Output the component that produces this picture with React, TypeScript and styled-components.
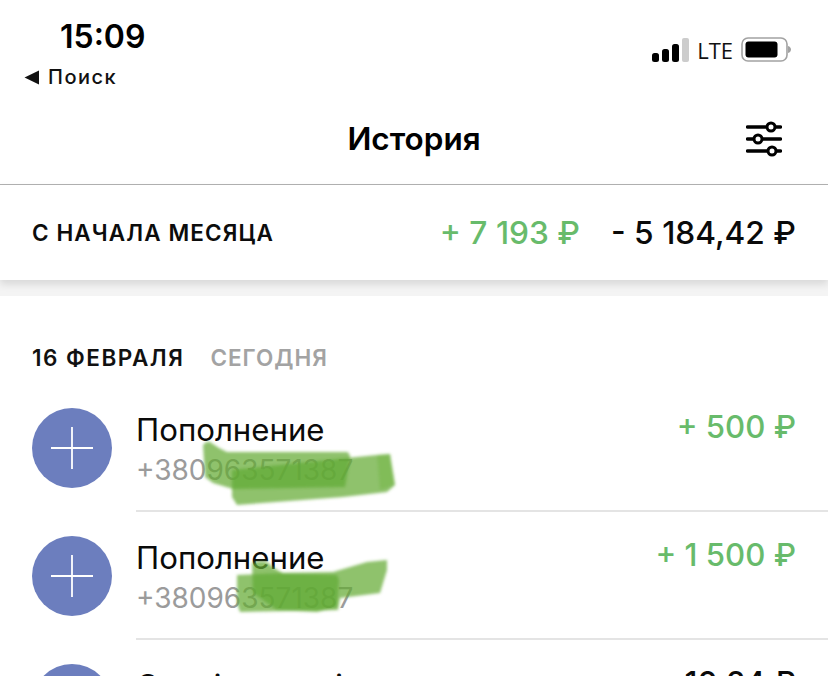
import React from 'react'
import styled, { createGlobalStyle } from 'styled-components'

const GlobalStyle = createGlobalStyle`
  html, body {
    margin: 0;
    padding: 0;
    background: #fff;
  }
  body {
    font-family: Inter, "Liberation Sans", sans-serif;
    overflow: hidden;
  }
`

const Screen = styled.div`
  width: 828px;
  height: 676px;
  overflow: hidden;
  background: #fff;
`

const StatusBar = styled.div`
  height: 100px;
  padding: 19px 32px 0 24px;
  box-sizing: border-box;
  display: flex;
  justify-content: space-between;
`

const StatusLeft = styled.div`
  display: flex;
  flex-direction: column;
`

const Time = styled.div`
  font-size: 32px;
  line-height: 36px;
  font-weight: 600;
  color: #000;
  margin-left: 36px;
`

const BackLink = styled.div`
  display: flex;
  align-items: center;
  gap: 8px;
  font-size: 20px;
  line-height: 30px;
  font-weight: 500;
  letter-spacing: 1.5px;
  color: #111;
  margin-top: 7px;
`

const StatusRight = styled.div`
  display: flex;
  align-items: center;
  gap: 8px;
  height: 26px;
  margin-top: 18px;
  margin-right: 5px;
`

const Lte = styled.span`
  font-family: "Open Sans", sans-serif;
  font-size: 22px;
  line-height: 26px;
  color: #111;
`

const NavBar = styled.div`
  height: 84px;
  display: flex;
  align-items: center;
  justify-content: center;
  position: relative;
  border-bottom: 1px solid #b2b2b2;
`

const Title = styled.div`
  font-size: 31.5px;
  font-weight: 600;
  color: #000;
  margin-top: -8px;
`

const FilterIcon = styled.svg`
  position: absolute;
  right: 46px;
  top: 21px;
`

const Summary = styled.div`
  height: 95px;
  padding: 0 32px;
  display: flex;
  align-items: center;
  background: #fff;
  box-shadow: 0 4px 8px rgba(0, 0, 0, 0.12);
  position: relative;
`

const SummaryLabel = styled.div`
  font-size: 22.5px;
  font-weight: 600;
  letter-spacing: 1.1px;
  color: #0c0c0c;
  flex: 1;
`

const SummaryValue = styled.div<{ $income?: boolean }>`
  font-size: 31.7px;
  font-weight: 500;
  color: ${({ $income }) => ($income ? '#68bb6b' : '#0a0a0a')};
  margin-left: ${({ $income }) => ($income ? '0' : '31px')};
`

const Band = styled.div`
  height: 16px;
  background: #f4f4f4;
`

const DateHeader = styled.div`
  padding: 47px 32px 0;
  height: 37px;
  display: flex;
  gap: 26px;
  font-size: 22.5px;
  line-height: 30px;
  font-weight: 600;
`

const DateText = styled.span`
  color: #111;
  letter-spacing: 1.5px;
`

const TodayText = styled.span`
  color: #a3a3a3;
  letter-spacing: 1px;
`

const List = styled.div`
  padding-top: 8px;
`

const Row = styled.div`
  height: 128px;
  display: flex;
  padding-left: 32px;
  box-sizing: border-box;
  position: relative;
`

const Avatar = styled.div`
  width: 80px;
  height: 80px;
  border-radius: 50%;
  background: #6c7ebe;
  display: flex;
  align-items: center;
  justify-content: center;
  flex-shrink: 0;
  margin-top: 20px;
`

const RowBody = styled.div`
  flex: 1;
  margin-left: 24px;
  padding: 20px 32px 0 0;
  display: flex;
  justify-content: space-between;
  border-bottom: 2px solid #e4e4e4;
  height: 102px;
`

const RowText = styled.div`
  display: flex;
  flex-direction: column;
`

const RowTitle = styled.div`
  font-size: 31.2px;
  line-height: 44px;
  color: #0a0a0a;
`

const RowSub = styled.div`
  font-size: 28px;
  line-height: 36px;
  color: #9b9b9b;
`

const RowAmount = styled.div<{ $income?: boolean }>`
  font-size: 31.2px;
  line-height: 38px;
  font-weight: 500;
  color: ${({ $income }) => ($income ? '#68bb6b' : '#0a0a0a')};
`

const Smear = styled.svg`
  position: absolute;
  pointer-events: none;
  overflow: visible;
`

const FirstSmear = styled(Smear)`
  left: 200px;
  top: 50px;
`

const SecondSmear = styled(Smear)`
  left: 236px;
  top: 44px;
`

const PlusIcon = () => (
  <svg width="42" height="42" viewBox="0 0 42 42">
    <path d="M21 0v42M0 21h42" stroke="#fff" strokeWidth="1.8" fill="none" />
  </svg>
)

const SmearBlur = () => (
  <filter id="smear-blur" x="-10%" y="-20%" width="120%" height="140%">
    <feGaussianBlur stdDeviation="1.4" />
  </filter>
)

const items = [
  { title: 'Пополнение', phone: '+380963571387', amount: '+ 500 ₽', income: true },
  { title: 'Пополнение', phone: '+380963571387', amount: '+ 1 500 ₽', income: true },
  { title: 'Сервіс оплаті', phone: '', amount: '- 10,24 ₽', income: false },
]

const App = () => (
  <Screen>
    <GlobalStyle />
    <StatusBar>
      <StatusLeft>
        <Time>15:09</Time>
        <BackLink>
          <svg width="16" height="15" viewBox="0 0 16 15">
            <path d="M15 0.5v14L0.5 7.500z" fill="#111" />
          </svg>
          Поиск
        </BackLink>
      </StatusLeft>
      <StatusRight>
        <svg width="38" height="24" viewBox="0 0 38 24">
          <rect x="1" y="15" width="7" height="9" rx="2.5" fill="#000" />
          <rect x="11" y="11" width="7" height="13" rx="2.5" fill="#000" />
          <rect x="21" y="6" width="7" height="18" rx="2.5" fill="#000" />
          <rect x="31" y="0" width="7" height="24" rx="2" fill="#ccc" />
        </svg>
        <Lte>LTE</Lte>
        <svg width="50" height="26" viewBox="0 0 50 26">
          <rect x="1" y="1" width="45" height="23" rx="6" fill="none" stroke="#a2a2a2" strokeWidth="1.6" />
          <rect x="4.5" y="4.5" width="32" height="16" rx="3" fill="#000" />
          <path d="M47 9c2 .6 3 2 3 3.500s-1 3-3 3.500z" fill="#a2a2a2" />
        </svg>
      </StatusRight>
    </StatusBar>
    <NavBar>
      <Title>История</Title>
      <FilterIcon width="36" height="36" viewBox="0 0 36 36" fill="none" stroke="#000" strokeWidth="3.4" strokeLinecap="round">
        <path d="M1.500 6h18M29.500 6h5M1.500 18h6M17 18h17.500M1.500 30h20M30.500 30h4" />
        <circle cx="25" cy="6" r="4" strokeWidth="3" />
        <circle cx="12" cy="18" r="4" strokeWidth="3" />
        <circle cx="26" cy="30" r="4" strokeWidth="3" />
      </FilterIcon>
    </NavBar>
    <Summary>
      <SummaryLabel>С НАЧАЛА МЕСЯЦА</SummaryLabel>
      <SummaryValue $income>+ 7 193 ₽</SummaryValue>
      <SummaryValue>- 5 184,42 ₽</SummaryValue>
    </Summary>
    <Band />
    <DateHeader>
      <DateText>16 ФЕВРАЛЯ</DateText>
      <TodayText>СЕГОДНЯ</TodayText>
    </DateHeader>
    <List>
      {items.map((item, i) => (
        <Row key={i}>
          <Avatar>
            <PlusIcon />
          </Avatar>
          <RowBody>
            <RowText>
              <RowTitle>{item.title}</RowTitle>
              <RowSub>{item.phone}</RowSub>
            </RowText>
            <RowAmount $income={item.income}>{item.amount}</RowAmount>
          </RowBody>
          {i === 0 && (
            <FirstSmear width="196" height="68" viewBox="0 0 196 68">
              <defs>
                <SmearBlur />
              </defs>
              <g fill="#63ab33" filter="url(#smear-blur)">
                <path fillOpacity="0.72" d="M3 7Q6 3 10 4Q18 10 27 14L147 14Q150 15 150 20L145 49L33 51L13 45L5 39Z" />
                <path fillOpacity="0.72" d="M32 32L147 20L177 17L190 16L195 47L187 54L143 59L37 67L32 59Z" />
                <path fillOpacity="0.3" d="M177 17L190 16L195 47L180 52Z" />
              </g>
            </FirstSmear>
          )}
          {i === 1 && (
            <SecondSmear width="152" height="54" viewBox="0 0 152 54">
              <g fill="#63ab33" fillOpacity="0.72" filter="url(#smear-blur)">
                <path d="M16 3Q24 0 31 2Q38 9 47 13L101 15L103 20L101 47L81 52L41 50L17 33Z" />
                <path d="M1 15L47 13L97 12L131 2L151 0L151 10L144 33L104 38L102 50L4 52L1 43Z" />
              </g>
            </SecondSmear>
          )}
        </Row>
      ))}
    </List>
  </Screen>
)

export default App
